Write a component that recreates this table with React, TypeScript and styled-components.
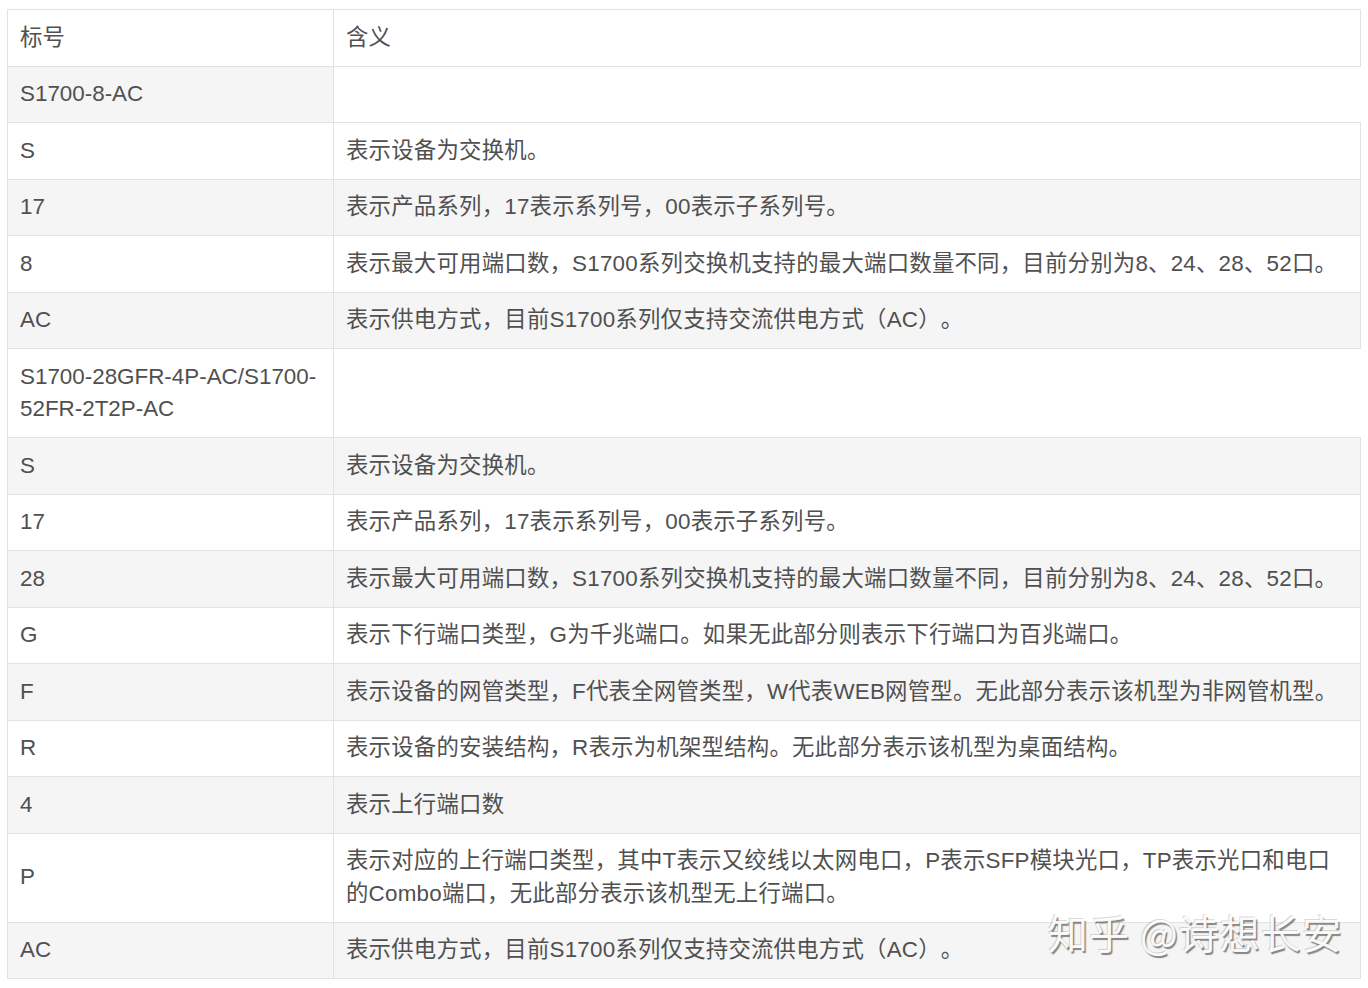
import React from "react";
import styled, { createGlobalStyle } from "styled-components";

const Global = createGlobalStyle`
  html, body {
    margin: 0;
    padding: 0;
    background: #ffffff;
  }
  body {
    font-family: "Liberation Sans", "Noto Sans CJK SC", sans-serif;
  }
`;

const Page = styled.div`
  position: relative;
  width: 1368px;
  min-height: 988px;
  padding: 9px 7px 0 7px;
  box-sizing: border-box;
`;

const Table = styled.table`
  width: 1354px;
  table-layout: fixed;
  border-collapse: collapse;
  font-family: "Liberation Sans", "Noto Sans CJK SC", sans-serif;
  font-size: 22.4px;
  line-height: 32.5px;
  color: #505050;
  text-spacing-trim: space-all;
`;

const Row = styled.tr<{ $shaded: boolean }>`
  background: ${(p) => (p.$shaded ? "#f5f5f5" : "#ffffff")};
`;

const Cell = styled.td<{ $desc?: boolean }>`
  border: 1px solid #e2e2e2;
  padding: 11.5px 12px;
  vertical-align: middle;
  text-align: left;
  word-break: break-word;
  overflow-wrap: anywhere;
  letter-spacing: ${(p) => (p.$desc ? "0.22px" : "0")};
`;

const Watermark = styled.div`
  position: absolute;
  left: 1048px;
  top: 905px;
  font-family: "Noto Sans CJK SC", sans-serif;
  font-size: 40px;
  line-height: 54px;
  letter-spacing: 1px;
  color: rgba(255, 255, 255, 0.94);
  text-shadow: 1.5px 1.5px 1px rgba(60, 60, 60, 0.6),
    -1px -1px 0 rgba(120, 120, 120, 0.3);
  white-space: nowrap;
  pointer-events: none;
  text-spacing-trim: space-all;
`;

type RowData = { code: string; desc?: string };

const rows: RowData[] = [
  { code: "标号", desc: "含义" },
  { code: "S1700-8-AC" },
  { code: "S", desc: "表示设备为交换机。" },
  { code: "17", desc: "表示产品系列，17表示系列号，00表示子系列号。" },
  {
    code: "8",
    desc: "表示最大可用端口数，S1700系列交换机支持的最大端口数量不同，目前分别为8、24、28、52口。",
  },
  { code: "AC", desc: "表示供电方式，目前S1700系列仅支持交流供电方式（AC）。" },
  { code: "S1700-28GFR-4P-AC/S1700-52FR-2T2P-AC" },
  { code: "S", desc: "表示设备为交换机。" },
  { code: "17", desc: "表示产品系列，17表示系列号，00表示子系列号。" },
  {
    code: "28",
    desc: "表示最大可用端口数，S1700系列交换机支持的最大端口数量不同，目前分别为8、24、28、52口。",
  },
  { code: "G", desc: "表示下行端口类型，G为千兆端口。如果无此部分则表示下行端口为百兆端口。" },
  {
    code: "F",
    desc: "表示设备的网管类型，F代表全网管类型，W代表WEB网管型。无此部分表示该机型为非网管机型。",
  },
  { code: "R", desc: "表示设备的安装结构，R表示为机架型结构。无此部分表示该机型为桌面结构。" },
  { code: "4", desc: "表示上行端口数" },
  {
    code: "P",
    desc: "表示对应的上行端口类型，其中T表示又绞线以太网电口，P表示SFP模块光口，TP表示光口和电口的Combo端口，无此部分表示该机型无上行端口。",
  },
  { code: "AC", desc: "表示供电方式，目前S1700系列仅支持交流供电方式（AC）。" },
];

export default function App() {
  return (
    <>
      <Global />
      <Page>
        <Table>
          <colgroup>
            <col style={{ width: 326 }} />
            <col />
          </colgroup>
          <tbody>
            {rows.map((r, i) => (
              <Row key={i} $shaded={i % 2 === 1}>
                <Cell>{r.code}</Cell>
                {r.desc !== undefined && <Cell $desc>{r.desc}</Cell>}
              </Row>
            ))}
          </tbody>
        </Table>
        <Watermark>知乎 @诗想长安</Watermark>
      </Page>
    </>
  );
}
